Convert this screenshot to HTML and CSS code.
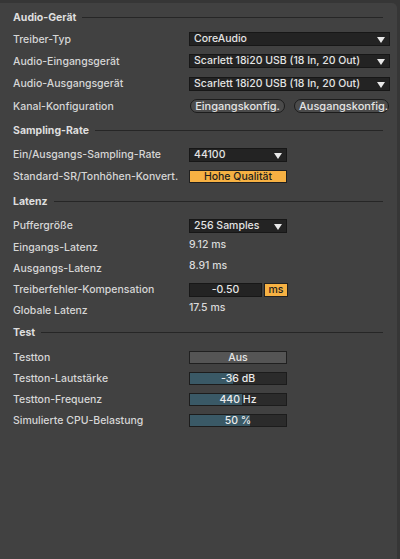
FILE: index.html
```html
<!DOCTYPE html>
<html lang="de">
<head>
    <meta charset="UTF-8">
    <meta name="viewport" content="width=device-width, initial-scale=1.0">
    <title>Audio</title>
    <link rel="stylesheet" href="styles.css">
</head>
<body>
    <div class="panel">
        <div class="section-head first"><span>Audio-Gerät</span><div class="rule"></div></div>
        <div class="row tall">
            <div class="label">Treiber-Typ</div>
            <div class="select wide">CoreAudio<span class="arrow"></span></div>
        </div>
        <div class="row tall">
            <div class="label">Audio-Eingangsgerät</div>
            <div class="select wide">Scarlett 18i20 USB (18 In, 20 Out)<span class="arrow"></span></div>
        </div>
        <div class="row tall">
            <div class="label">Audio-Ausgangsgerät</div>
            <div class="select wide">Scarlett 18i20 USB (18 In, 20 Out)<span class="arrow"></span></div>
        </div>
        <div class="row tall">
            <div class="label">Kanal-Konfiguration</div>
            <div class="pills">
                <div class="pill">Eingangskonfig.</div>
                <div class="pill">Ausgangskonfig.</div>
            </div>
        </div>

        <div class="section-head"><span>Sampling-Rate</span><div class="rule"></div></div>
        <div class="row">
            <div class="label">Ein/Ausgangs-Sampling-Rate</div>
            <div class="select">44100<span class="arrow"></span></div>
        </div>
        <div class="row">
            <div class="label">Standard-SR/Tonhöhen-Konvert.</div>
            <div class="toggle on">Hohe Qualität</div>
        </div>

        <div class="section-head spaced"><span>Latenz</span><div class="rule"></div></div>
        <div class="row">
            <div class="label">Puffergröße</div>
            <div class="select">256 Samples<span class="arrow"></span></div>
        </div>
        <div class="row">
            <div class="label">Eingangs-Latenz</div>
            <div class="value">9.12 ms</div>
        </div>
        <div class="row">
            <div class="label">Ausgangs-Latenz</div>
            <div class="value">8.91 ms</div>
        </div>
        <div class="row">
            <div class="label">Treiberfehler-Kompensation</div>
            <div class="number-group">
                <div class="number">-0.50</div>
                <div class="unit">ms</div>
            </div>
        </div>
        <div class="row">
            <div class="label">Globale Latenz</div>
            <div class="value">17.5 ms</div>
        </div>

        <div class="section-head close"><span>Test</span><div class="rule"></div></div>
        <div class="row">
            <div class="label">Testton</div>
            <div class="toggle">Aus</div>
        </div>
        <div class="row">
            <div class="label">Testton-Lautstärke</div>
            <div class="slider"><div class="fill" style="width: 45%"></div><span>-36 dB</span></div>
        </div>
        <div class="row">
            <div class="label">Testton-Frequenz</div>
            <div class="slider"><div class="fill" style="width: 54%"></div><span>440 Hz</span></div>
        </div>
        <div class="row">
            <div class="label">Simulierte CPU-Belastung</div>
            <div class="slider"><div class="fill" style="width: 62%"></div><span>50 %</span></div>
        </div>
    </div>
</body>
</html>
```

FILE: styles.css
```css
* {
    margin: 0;
    padding: 0;
    box-sizing: border-box;
}

body {
    background: #363636;
    font-family: 'Inter', 'Open Sans', sans-serif;
    font-size: 10.5px;
    font-weight: 500;
    color: #d6d6d6;
    height: 559px;
    overflow: hidden;
}

.panel {
    background: #414141;
    margin: 3px 3px 0 0;
    height: 556px;
    border-top-right-radius: 5px;
    padding: 7.5px 8px 0 13px;
}

.section-head {
    display: flex;
    align-items: center;
    height: 14px;
    margin-top: 6.5px;
    margin-bottom: 6.5px;
    font-weight: 700;
    color: #dedede;
}

.section-head.first {
    margin-top: 0;
    margin-bottom: 3.5px;
}

.section-head.spaced {
    margin-top: 8px;
}

.section-head.close {
    margin-top: 4.5px;
}

.section-head .rule {
    flex: 1;
    height: 1px;
    background: #262626;
    margin: 0 6px 0 6px;
}

.row {
    display: grid;
    grid-template-columns: 176px 1fr;
    align-items: center;
    height: 21.25px;
}

.row.tall {
    height: 22.3px;
}

.label {
    white-space: nowrap;
}

.select {
    position: relative;
    width: 98px;
    height: 14px;
    line-height: 12px;
    background: #232323;
    border: 1px solid #171717;
    padding-left: 4px;
    color: #e4e4e4;
    white-space: nowrap;
}

.select.wide {
    width: 201px;
}

.arrow {
    position: absolute;
    right: 4px;
    top: 4px;
    width: 0;
    height: 0;
    border-left: 4px solid transparent;
    border-right: 4px solid transparent;
    border-top: 6px solid #e8e8e8;
}

.pills {
    display: flex;
    gap: 9px;
    padding-left: 1px;
}

.pill {
    height: 14px;
    line-height: 12px;
    padding: 0 4px;
    border: 1px solid #1c1c1c;
    border-radius: 7px;
    background: #4b4b4b;
    color: #e4e4e4;
    width: 95px;
    text-align: center;
    font-size: 11px;
}

.toggle {
    width: 98px;
    height: 13px;
    line-height: 11px;
    text-align: center;
    border: 1px solid #202020;
    background: #555555;
    color: #e6e6e6;
}

.toggle.on {
    background: #f6b143;
    color: #1e1e1e;
}

.value {
    margin-bottom: 6px;
    color: #dadada;
}

.number-group {
    display: flex;
    gap: 2px;
}

.number {
    width: 73px;
    height: 14px;
    line-height: 12px;
    text-align: center;
    background: #232323;
    border: 1px solid #171717;
    color: #e6e6e6;
}

.unit {
    width: 24px;
    height: 14px;
    line-height: 12px;
    text-align: center;
    background: #f6b143;
    border: 1px solid #202020;
    color: #1e1e1e;
}

.slider {
    position: relative;
    width: 98px;
    height: 13px;
    background: #2b2b2b;
    border: 1px solid #1c1c1c;
}

.slider .fill {
    height: 100%;
    background: #3a5966;
}

.slider span {
    position: absolute;
    inset: 0;
    line-height: 11px;
    text-align: center;
    color: #ececec;
}
```
